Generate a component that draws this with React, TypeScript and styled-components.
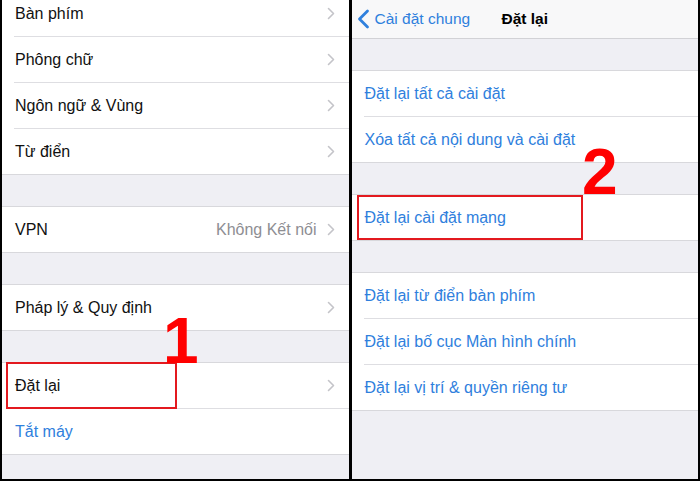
import React from 'react';
import styled, { createGlobalStyle } from 'styled-components';

type Item = { label: string; value?: string; tone?: 'blue' | 'black' };

const leftGroups: Item[][] = [
  [{ label: 'Bàn phím' }, { label: 'Phông chữ' }, { label: 'Ngôn ngữ & Vùng' }, { label: 'Từ điển' }],
  [{ label: 'VPN', value: 'Không Kết nối' }],
  [{ label: 'Pháp lý & Quy định' }],
  [{ label: 'Đặt lại' }, { label: 'Tắt máy', tone: 'blue' }],
];

const rightGroups: string[][] = [
  ['Đặt lại tất cả cài đặt', 'Xóa tất cả nội dung và cài đặt'],
  ['Đặt lại cài đặt mạng'],
  ['Đặt lại từ điển bàn phím', 'Đặt lại bố cục Màn hình chính', 'Đặt lại vị trí & quyền riêng tư'],
];

const Chevron: React.FC = () => (
  <svg width="8" height="13" viewBox="0 0 8 13" fill="none">
    <path d="M1.5 1.5L6.5 6.5L1.5 11.5" stroke="#c4c4c9" strokeWidth="1.6" strokeLinecap="round" strokeLinejoin="round" />
  </svg>
);

const BackChevron: React.FC = () => (
  <svg width="13" height="20" viewBox="0 0 13 20" fill="none">
    <path d="M10.5 2L2.5 10L10.5 18" stroke="#2f80dd" strokeWidth="2.8" strokeLinecap="round" strokeLinejoin="round" />
  </svg>
);

const App: React.FC = () => {
  return (
    <>
      <GlobalStyle />
      <Frame>
        <Panel>
          <Scroller $offset={-9}>
            {leftGroups.map((group, gi) => (
              <Group key={gi} $first={gi === 0}>
                {group.map((item) => (
                  <Row key={item.label}>
                    <RowBody>
                      <Label $tone={item.tone ?? 'black'}>{item.label}</Label>
                      {item.tone !== 'blue' && (
                        <Accessory>
                          {item.value && <Value>{item.value}</Value>}
                          <Chevron />
                        </Accessory>
                      )}
                    </RowBody>
                  </Row>
                ))}
              </Group>
            ))}
          </Scroller>
        </Panel>
        <Panel>
          <NavBar>
            <BackButton>
              <BackChevron />
              <span>Cài đặt chung</span>
            </BackButton>
            <NavTitle>Đặt lại</NavTitle>
          </NavBar>
          <Scroller $offset={0}>
            {rightGroups.map((group, gi) => (
              <Group key={gi}>
                {group.map((label) => (
                  <Row key={label}>
                    <RowBody>
                      <Label $tone="blue">{label}</Label>
                    </RowBody>
                  </Row>
                ))}
              </Group>
            ))}
          </Scroller>
        </Panel>

        <Highlight style={{ left: 6, top: 362, width: 171, height: 47 }} />
        <StepNumber style={{ left: 163, top: 309 }}>1</StepNumber>
        <Highlight style={{ left: 357, top: 195, width: 226, height: 45 }} />
        <StepNumber style={{ left: 582, top: 140 }}>2</StepNumber>
      </Frame>
    </>
  );
};

// Styled components
const GlobalStyle = createGlobalStyle`
  html, body {
    margin: 0;
    padding: 0;
    background: #000;
  }
  * {
    box-sizing: border-box;
  }
`;

const Frame = styled.div`
  position: relative;
  display: flex;
  gap: 3px;
  width: 700px;
  height: 481px;
  padding: 0 2px 2px 2px;
  background: #000;
  font-family: 'Liberation Sans', Arial, sans-serif;
  overflow: hidden;
`;

const Panel = styled.div`
  flex: 1;
  display: flex;
  flex-direction: column;
  background: #efeff4;
  overflow: hidden;
`;

const Scroller = styled.div<{ $offset: number }>`
  display: flex;
  flex-direction: column;
  gap: 31px;
  margin-top: ${(p) => p.$offset}px;
  padding-top: ${(p) => (p.$offset < 0 ? 0 : 31)}px;
`;

const Group = styled.div<{ $first?: boolean }>`
  background: #fff;
  border-top: ${(p) => (p.$first ? 'none' : '1px solid #d8d8dc')};
  border-bottom: 1px solid #d8d8dc;
`;

const Row = styled.div`
  display: flex;
  padding-left: 12px;
`;

const RowBody = styled.div`
  flex: 1;
  display: flex;
  align-items: center;
  justify-content: space-between;
  height: 45px;
  padding: 0 14px 0 1px;
  box-sizing: content-box;

  ${Row} + ${Row} & {
    border-top: 1px solid #dedee2;
  }
`;

const Label = styled.span<{ $tone: 'blue' | 'black' }>`
  font-size: 16px;
  color: ${(p) => (p.$tone === 'blue' ? '#2f80dd' : '#111')};
  white-space: nowrap;
`;

const Accessory = styled.div`
  display: flex;
  align-items: center;
  gap: 10px;
`;

const Value = styled.span`
  font-size: 16px;
  color: #8e8e93;
`;

const NavBar = styled.div`
  position: relative;
  display: flex;
  align-items: center;
  justify-content: center;
  height: 39px;
  flex-shrink: 0;
  background: #f8f8f9;
  border-bottom: 1px solid #d2d2d6;
`;

const BackButton = styled.div`
  position: absolute;
  left: 5px;
  top: 0;
  bottom: 0;
  display: flex;
  align-items: center;
  gap: 5px;
  color: #2f80dd;
  font-size: 15.5px;
`;

const NavTitle = styled.div`
  font-size: 15.5px;
  font-weight: 700;
  color: #000;
`;

const Highlight = styled.div`
  position: absolute;
  border: 2px solid #e3191f;
`;

const StepNumber = styled.div`
  position: absolute;
  font-family: 'Liberation Sans', Arial, sans-serif;
  font-size: 64px;
  font-weight: 700;
  line-height: 1;
  color: #ff0000;
`;

export default App;
